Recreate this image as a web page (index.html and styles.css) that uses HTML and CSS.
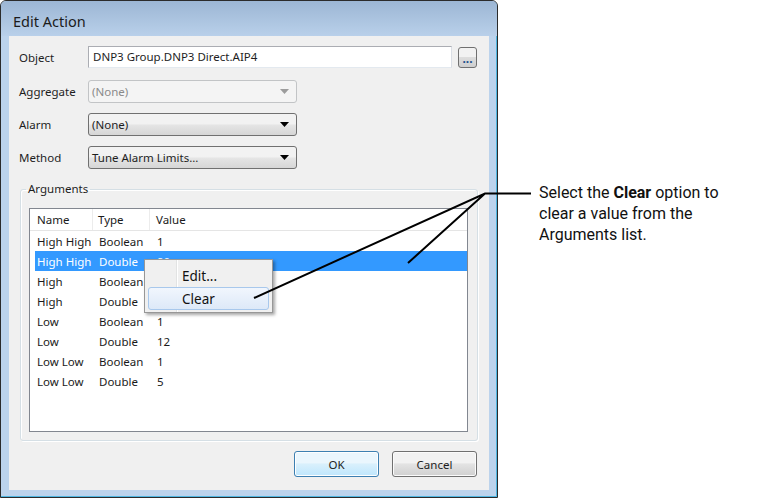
FILE: index.html
```html
<!DOCTYPE html>
<html lang="en">
<head>
    <meta charset="UTF-8">
    <title>Edit Action</title>
    <link rel="stylesheet" href="styles.css">
</head>
<body>
    <div class="page">
        <div class="window">
            <div class="titlebar">Edit Action</div>
            <div class="client">
                <div class="row first">
                    <span class="label">Object</span>
                    <div class="textbox">DNP3 Group.DNP3 Direct.AIP4</div>
                    <div class="browse">...</div>
                </div>
                <div class="row">
                    <span class="label">Aggregate</span>
                    <div class="combo disabled">
                        <span>(None)</span>
                        <svg width="9" height="5" viewBox="0 0 9 5"><path d="M0 0h9L4.5 5z"/></svg>
                    </div>
                </div>
                <div class="row">
                    <span class="label">Alarm</span>
                    <div class="combo">
                        <span>(None)</span>
                        <svg width="9" height="5" viewBox="0 0 9 5"><path d="M0 0h9L4.5 5z"/></svg>
                    </div>
                </div>
                <div class="row">
                    <span class="label">Method</span>
                    <div class="combo">
                        <span>Tune Alarm Limits...</span>
                        <svg width="9" height="5" viewBox="0 0 9 5"><path d="M0 0h9L4.5 5z"/></svg>
                    </div>
                </div>

                <fieldset class="group">
                    <legend>Arguments</legend>
                    <div class="list">
                        <div class="list-head">
                            <span class="h-name">Name</span>
                            <span class="h-type">Type</span>
                            <span class="h-value">Value</span>
                        </div>
                        <div class="list-row"><span class="c-name">High High</span><span class="c-type">Boolean</span><span>1</span></div>
                        <div class="list-row selected"><span class="c-name">High High</span><span class="c-type">Double</span><span>90</span></div>
                        <div class="list-row"><span class="c-name">High</span><span class="c-type">Boolean</span><span>1</span></div>
                        <div class="list-row"><span class="c-name">High</span><span class="c-type">Double</span><span>80</span></div>
                        <div class="list-row"><span class="c-name">Low</span><span class="c-type">Boolean</span><span>1</span></div>
                        <div class="list-row"><span class="c-name">Low</span><span class="c-type">Double</span><span>12</span></div>
                        <div class="list-row"><span class="c-name">Low Low</span><span class="c-type">Boolean</span><span>1</span></div>
                        <div class="list-row"><span class="c-name">Low Low</span><span class="c-type">Double</span><span>5</span></div>
                    </div>
                </fieldset>

                <div class="buttons">
                    <button class="btn default">OK</button>
                    <button class="btn">Cancel</button>
                </div>
            </div>
        </div>

        <p class="callout">Select the <b>Clear</b> option to<br>clear a value from the<br>Arguments list.</p>

        <div class="menu">
            <div class="menu-item">Edit...</div>
            <div class="menu-item hot">Clear</div>
        </div>

        <svg class="leaders" width="768" height="499" viewBox="0 0 768 499">
            <path d="M531 193.5H485L254 298M485 193.5L408 263"/>
        </svg>
    </div>
</body>
</html>
```

FILE: styles.css
```css
* {
    box-sizing: border-box;
}

body {
    margin: 0;
    background: #fff;
    font-family: "Noto Sans", "Open Sans", sans-serif;
    font-size: 11.5px;
    color: #1e1e1e;
}

.page {
    position: relative;
    width: 768px;
    height: 499px;
    display: flex;
    align-items: flex-start;
    overflow: hidden;
}

/* dialog frame */
.window {
    width: 498px;
    height: 498px;
    flex: none;
    border: 1px solid #2b2b2b;
    border-radius: 6px 6px 0 0;
    background: #bcd3ec;
    box-shadow: inset -1px -1px 0 #4fb6e0;
    display: flex;
    flex-direction: column;
}

.titlebar {
    height: 35px;
    padding: 11px 0 0 12px;
    font-size: 14.5px;
    line-height: 18px;
    color: #1b1b1b;
    background: linear-gradient(#9cb6d4, #b9d0ea);
    border-radius: 5px 5px 0 0;
}

.client {
    width: 480px;
    height: 454px;
    margin: 0 0 0 8px;
    background: #f0f0f0;
    padding: 0 10px;
    display: flex;
    flex-direction: column;
}

.row {
    display: flex;
    align-items: center;
    height: 23px;
    margin-top: 10px;
}

.row.first {
    height: 22px;
    margin-top: 10px;
    margin-bottom: 2px;
}

.label {
    width: 69px;
    flex: none;
}

.textbox {
    width: 364px;
    height: 22px;
    background: #fff;
    border: 1px solid #abadb3;
    border-right-color: #dbdfe6;
    border-bottom-color: #e3e9ef;
    padding: 0 4px;
    line-height: 20px;
}

.browse {
    width: 19px;
    height: 21px;
    margin-left: 6px;
    border: 1px solid #707070;
    border-radius: 3px;
    background: linear-gradient(#f2f2f2 50%, #dddddd 50%, #cfcfcf);
    color: #1c4f8c;
    font-weight: bold;
    font-size: 12px;
    text-align: center;
    line-height: 21px;
}

.combo {
    width: 209px;
    height: 23px;
    border: 1px solid #707070;
    border-radius: 3px;
    background: linear-gradient(#f2f2f2 45%, #e4e4e4 55%, #d6d6d6);
    display: flex;
    align-items: center;
    justify-content: space-between;
    padding: 0 7px 0 3px;
}

.combo svg {
    fill: #000;
}

.combo.disabled {
    border-color: #c2c4c6;
    background: #f4f4f4;
    color: #8a8a8a;
}

.combo.disabled svg {
    fill: #9c9c9c;
}

/* arguments group */
.group {
    margin: 12px 1px 0 1px;
    padding: 11px 9px 8px 8px;
    border: 1px solid #d5dfe5;
    border-radius: 3px;
    box-shadow: inset 1px 1px 0 #fff, 1px 1px 0 #fff;
}

.group legend {
    padding: 0 2px;
    margin-left: -3px;
    line-height: 16px;
}

.list {
    height: 224px;
    background: #fff;
    border: 1px solid #828790;
    color: #1a1a1a;
}

.list-head {
    display: flex;
    height: 22px;
    align-items: center;
    border-bottom: 1px solid #e5e5e5;
}

.list-head span {
    height: 100%;
    display: flex;
    align-items: center;
}

.h-name {
    width: 63px;
    padding-left: 7px;
    border-right: 1px solid #ececec;
}

.h-type {
    width: 57px;
    padding-left: 5px;
    border-right: 1px solid #ececec;
}

.h-value {
    padding-left: 6px;
}

.list-row {
    display: flex;
    align-items: center;
    height: 20px;
    margin-left: 5px;
    padding-left: 2px;
}

.list-row.selected {
    background: #3399ff;
    color: #fff;
}

.c-name {
    width: 62px;
}

.c-type {
    width: 58px;
}

.buttons {
    display: flex;
    justify-content: flex-end;
    gap: 13px;
    margin-top: 10px;
    padding-right: 2px;
}

.btn {
    width: 85px;
    height: 26px;
    font-family: inherit;
    font-size: 11.5px;
    color: #1e1e1e;
    border: 1px solid #707070;
    border-radius: 3px;
    background: linear-gradient(#f2f2f2 45%, #e3e3e3 50%, #d0d0d0);
    box-shadow: inset 0 0 0 1px #fbfbfb;
    padding: 0;
}

.btn.default {
    border-color: #3c7fb1;
    background: linear-gradient(#eaf6fd 45%, #d9f0fc 50%, #bee6fd);
    box-shadow: inset 0 0 0 1px #fdfeff;
}

/* callout text */
.callout {
    margin: 182px 0 0 41px;
    width: 225px;
    font-family: Roboto, "Noto Sans", sans-serif;
    font-size: 16px;
    line-height: 21px;
    color: #111;
}

.callout b {
    font-weight: bold;
}

/* context menu and leader lines sit over the dialog */
.menu {
    position: absolute;
    left: 144px;
    top: 259px;
    width: 129px;
    height: 54px;
    background: #f0f0f0;
    border: 1px solid #979797;
    box-shadow: 2px 2px 3px rgba(0, 0, 0, 0.35);
    padding: 4px 3px 3px;
    background-image: linear-gradient(90deg, transparent 31px, #e2e3e3 31px, #e2e3e3 32px, #fff 32px, #fff 33px, transparent 33px);
}

.menu-item {
    height: 23px;
    padding-left: 33px;
    line-height: 22px;
    font-size: 13.5px;
    color: #111;
    border: 1px solid transparent;
    border-radius: 3px;
}

.menu-item.hot {
    border-color: #a8c8ec;
    background: linear-gradient(#f1f6fd, #dde9f8);
}

.leaders {
    position: absolute;
    left: 0;
    top: 0;
    pointer-events: none;
}

.leaders path {
    fill: none;
    stroke: #000;
    stroke-width: 2;
}
```
